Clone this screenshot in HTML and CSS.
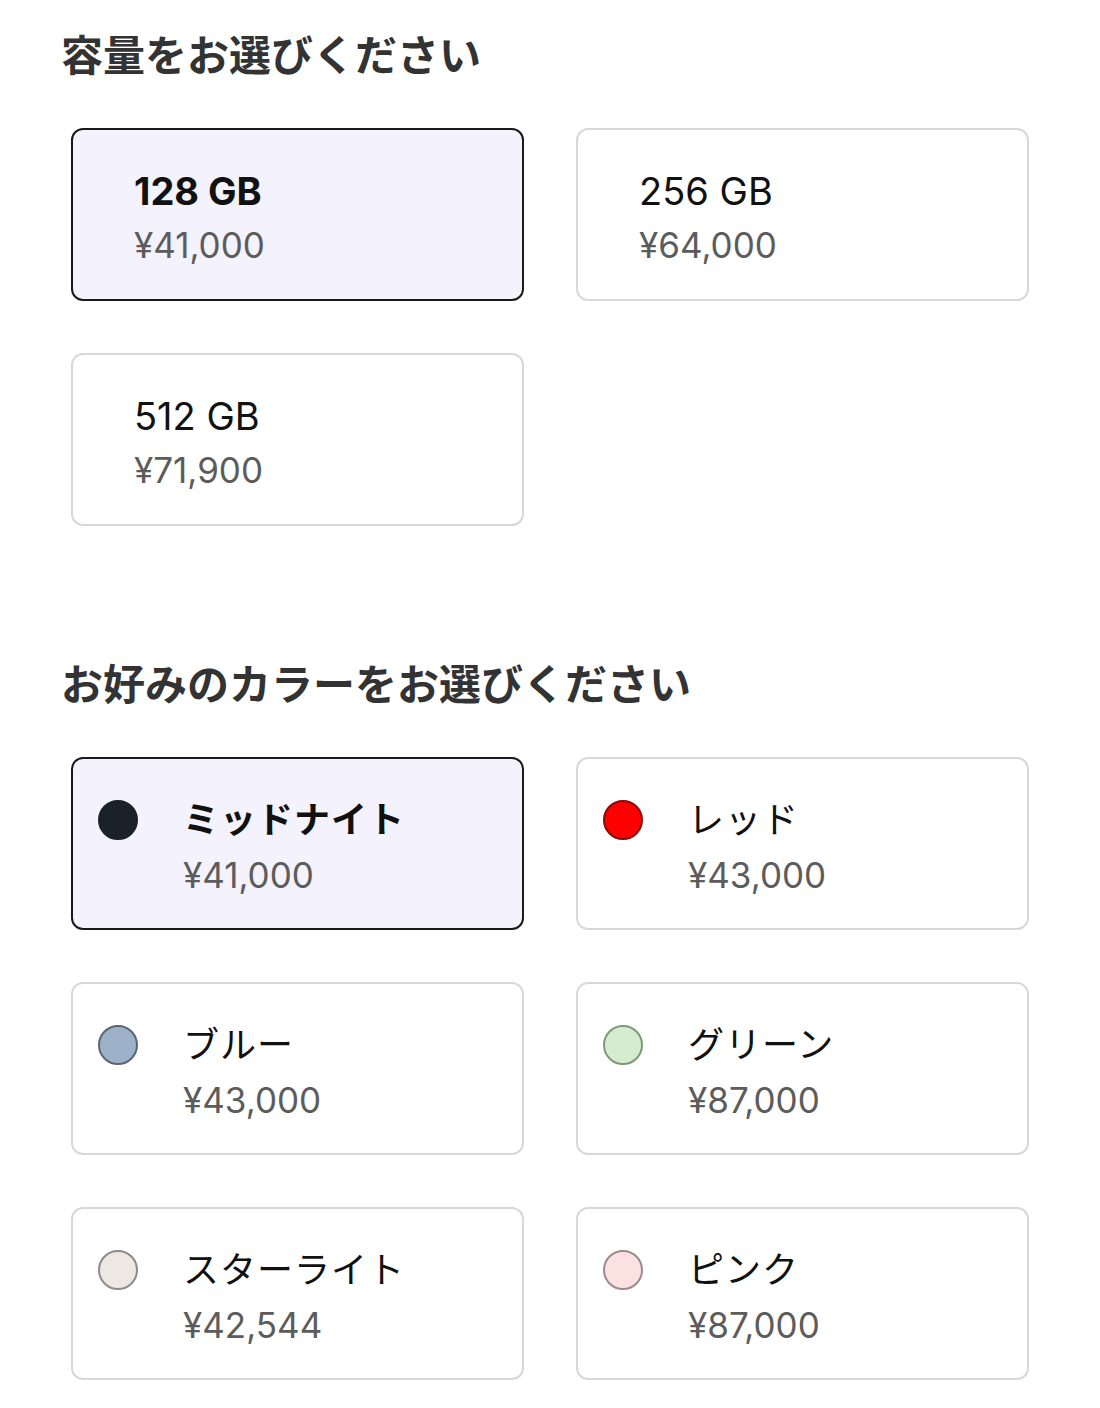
FILE: index.html
```html
<!DOCTYPE html>
<html lang="ja">
<head>
  <meta charset="UTF-8">
  <title>容量とカラーの選択</title>
  <link rel="stylesheet" href="styles.css">
</head>
<body>
  <div class="section">
    <h2 class="section-title">容量をお選びください</h2>
    <div class="option-grid">
      <div class="option selected">
        <div class="option-text">
          <div class="option-name">128 GB</div>
          <div class="option-price">¥41,000</div>
        </div>
      </div>
      <div class="option">
        <div class="option-text">
          <div class="option-name">256 GB</div>
          <div class="option-price">¥64,000</div>
        </div>
      </div>
      <div class="option">
        <div class="option-text">
          <div class="option-name">512 GB</div>
          <div class="option-price">¥71,900</div>
        </div>
      </div>
    </div>
  </div>

  <div class="section color-section">
    <h2 class="section-title">お好みのカラーをお選びください</h2>
    <div class="option-grid">
      <div class="option color-option selected">
        <span class="swatch midnight"></span>
        <div class="option-text">
          <div class="option-name">ミッドナイト</div>
          <div class="option-price">¥41,000</div>
        </div>
      </div>
      <div class="option color-option">
        <span class="swatch red"></span>
        <div class="option-text">
          <div class="option-name">レッド</div>
          <div class="option-price">¥43,000</div>
        </div>
      </div>
      <div class="option color-option">
        <span class="swatch blue"></span>
        <div class="option-text">
          <div class="option-name">ブルー</div>
          <div class="option-price">¥43,000</div>
        </div>
      </div>
      <div class="option color-option">
        <span class="swatch green"></span>
        <div class="option-text">
          <div class="option-name">グリーン</div>
          <div class="option-price">¥87,000</div>
        </div>
      </div>
      <div class="option color-option">
        <span class="swatch starlight"></span>
        <div class="option-text">
          <div class="option-name">スターライト</div>
          <div class="option-price">¥42,544</div>
        </div>
      </div>
      <div class="option color-option">
        <span class="swatch pink"></span>
        <div class="option-text">
          <div class="option-name">ピンク</div>
          <div class="option-price">¥87,000</div>
        </div>
      </div>
    </div>
  </div>
</body>
</html>
```

FILE: styles.css
```css
body {
  font-family: Inter, "Noto Sans CJK JP", sans-serif;
  margin: 0;
  padding: 31px 71px 0;
  color: #111;
  background-color: #fff;
}
.section-title {
  font-size: 42px;
  line-height: 50px;
  font-weight: 700;
  color: #333;
  margin: 0 0 47px -10px;
}
.color-section {
  margin-top: 134px;
}
.option-grid {
  display: grid;
  grid-template-columns: 1fr 1fr;
  gap: 52px;
}
.option {
  height: 173px;
  box-sizing: border-box;
  border: 2px solid #d8d8d8;
  border-radius: 12px;
  padding: 6px 0 0 61px;
  display: flex;
  align-items: center;
}
.option.selected {
  border-color: #1a1a1a;
  background-color: #f4f2fc;
}
.option-name {
  font-size: 38px;
  line-height: 54px;
  color: #111;
}
.option-price {
  font-size: 35px;
  line-height: 54px;
  color: #5c5c5c;
}
.selected .option-name {
  font-weight: 700;
}

/* カラー選択 */
.color-option {
  padding: 33px 0 0 25px;
  align-items: flex-start;
}
.color-option .option-name {
  font-size: 36px;
  line-height: 56px;
  letter-spacing: 1px;
}
.swatch {
  flex: none;
  width: 40px;
  height: 40px;
  box-sizing: border-box;
  border-radius: 50%;
  border: 2px solid #777;
  margin: 8px 45px 0 0;
}
.swatch.midnight {
  background: #1b2128;
  border-color: #1b2128;
}
.swatch.red {
  background: #ff0000;
  border-color: #8a0b0b;
}
.swatch.blue {
  background: #9db2c8;
  border-color: #5c6670;
}
.swatch.green {
  background: #d5eccf;
  border-color: #7b9a7a;
}
.swatch.starlight {
  background: #eee8e4;
  border-color: #8c8c8c;
}
.swatch.pink {
  background: #fbe2e1;
  border-color: #9e8a8c;
}
```
